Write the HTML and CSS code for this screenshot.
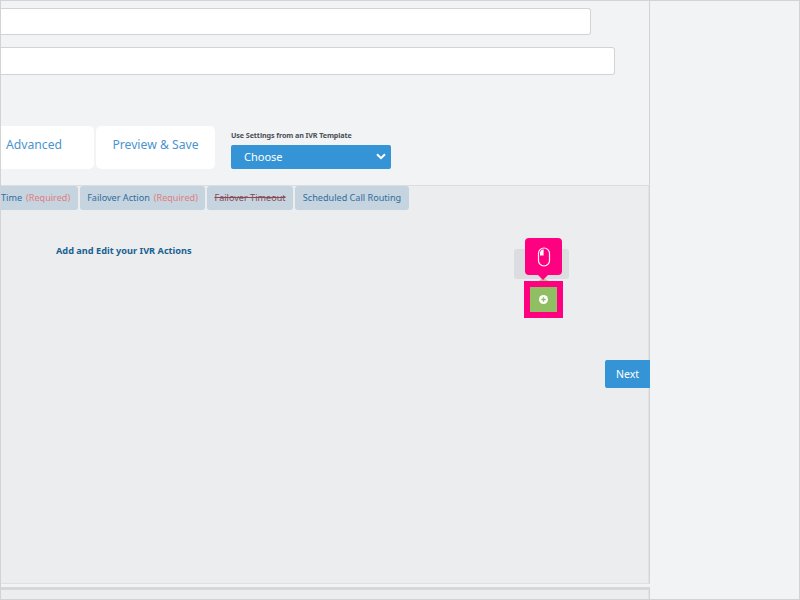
FILE: index.html
```html
<!DOCTYPE html>
<html lang="en">
<head>
<meta charset="utf-8">
<title>IVR Actions</title>
<link rel="stylesheet" href="styles.css">
</head>
<body>
<div class="frame">
  <main class="main">
    <div class="fields">
      <div class="field field-short"></div>
      <div class="field field-long"></div>
    </div>
    <div class="toolbar">
      <div class="steps">
        <a class="step step-advanced">Advanced</a>
        <a class="step step-preview">Preview &amp; Save</a>
      </div>
      <div class="template">
        <div class="template-label">Use Settings from an IVR Template</div>
        <div class="select">
          <span>Choose</span>
          <svg class="chevron" width="10" height="7" viewBox="0 0 10 7"><path d="M1 1.2l4 4 4-4" fill="none" stroke="#fff" stroke-width="2"/></svg>
        </div>
      </div>
    </div>
    <section class="panel">
      <div class="tabs">
        <a class="tab tab-first">Time <em>(Required)</em></a>
        <a class="tab tab-action">Failover Action <em>(Required)</em></a>
        <a class="tab tab-off">Failover Timeout</a>
        <a class="tab tab-routing">Scheduled Call Routing</a>
      </div>
      <div class="panel-body">
        <h2 class="actions-title">Add and Edit your IVR Actions</h2>
        <div class="add-area">
          <div class="add-grey"></div>
          <div class="add-target">
            <div class="add-green">
              <svg width="9" height="9" viewBox="0 0 9 9"><circle cx="4.5" cy="4.5" r="4.5" fill="#fff"/><path d="M4.5 2.3v4.4M2.3 4.5h4.4" stroke="#8fbe63" stroke-width="1.3"/></svg>
            </div>
          </div>
          <div class="hint">
            <svg width="16" height="22" viewBox="0 0 16 22"><rect x="2.5" y="2" width="11" height="18" rx="5.5" fill="none" stroke="#fff" stroke-width="1.2"/><path d="M7.6 3.2v6.3h-3a.6.6 0 0 1-.6-.6V7.6a4.4 4.4 0 0 1 3.6-4.4z" fill="#fff"/></svg>
          </div>
        </div>
        <a class="next">Next</a>
      </div>
      <div class="panel-foot"></div>
    </section>
  </main>
  <aside class="side"></aside>
</div>
</body>
</html>
```
FILE: styles.css
```css
html, body { margin: 0; padding: 0; }
body { width: 800px; height: 600px; overflow: hidden; background: #f2f3f5; font-family: "Noto Sans", "Open Sans", sans-serif; }
* { box-sizing: border-box; }
.frame { width: 800px; height: 600px; border: 1px solid #d2d3d5; display: flex; background: #f2f3f5; }
.main { width: 649px; height: 598px; border-right: 1px solid #d2d3d5; display: flex; flex-direction: column; }
.side { flex: 1; }
.fields { padding-top: 7px; display: flex; flex-direction: column; gap: 12px; }
.field { background: #fff; border: 1px solid #d2d3d5; border-left: 0; border-radius: 0 3px 3px 0; }
.field-short { width: 590px; height: 27px; }
.field-long { width: 614px; height: 28px; }
.toolbar { margin-top: 51px; height: 43px; display: flex; }
.steps { display: flex; gap: 2px; }
.step { background: #fff; height: 43px; color: #4a94d0; font-size: 12.2px; display: flex; align-items: center; justify-content: center; border-radius: 0 5px 5px 0; padding-bottom: 7px; }
.step-advanced { width: 93px; justify-content: flex-start; padding-left: 5px; }
.step-preview { width: 119px; border-radius: 5px; }
.template { margin-left: 16px; padding-top: 3px; }
.template-label { font-size: 7.2px; line-height: 12px; font-weight: 700; color: #4a4f55; white-space: nowrap; letter-spacing: -.1px; }
.select { margin-top: 4px; width: 160px; height: 24px; background: #3594d6; border-radius: 2px; color: #fff; font-size: 11px; display: flex; align-items: center; justify-content: space-between; padding: 0 5px 2px 13px; }
.panel { margin-top: 16px; flex: 1; background: #ecedef; border-top: 1px solid #dcdde0; display: flex; flex-direction: column; box-shadow: inset -1px 0 0 #e2e3e5; }
.tabs { display: flex; gap: 2px; height: 24px; }
.tab { background: #c5d4df; color: #2f6d9f; font-size: 9.1px; display: flex; align-items: center; gap: 4px; justify-content: center; border-radius: 3px; white-space: nowrap; padding-bottom: 1px; }
.tab em { font-style: normal; color: #e27d80; }
.tab-first { width: 77px; border-radius: 0 3px 3px 0; justify-content: flex-start; }
.tab-action { width: 125px; }
.tab-off { width: 86px; color: #8a4a55; text-decoration: line-through; }
.tab-routing { width: 114px; }
.panel-body { flex: 1; position: relative; }
.actions-title { margin: 34px 0 0 55px; font-size: 9.2px; line-height: 14px; font-weight: 700; color: #18618f; }
.add-area { position: absolute; left: 513px; top: 28px; width: 56px; height: 81px; isolation: isolate; }
.add-grey { position: absolute; left: 0; top: 11px; width: 55px; height: 30px; background: #dcdde0; border-radius: 3px; }
.add-target { position: absolute; left: 10px; top: 43px; width: 39px; height: 37px; border: 6px solid #ff0080; display: flex; }
.add-target::before { content: ""; position: absolute; left: 2px; top: -8px; width: 23px; height: 39px; background: #a9cc86; border-radius: 50%; z-index: -1; }
.add-green { flex: 1; background: #8fbe63; display: flex; align-items: center; justify-content: center; }
.hint { position: absolute; left: 11px; top: 0; width: 37px; height: 37px; background: #ff0080; border-radius: 4px; display: flex; align-items: center; justify-content: center; }
.hint::after { content: ""; position: absolute; left: 12px; top: 36px; border: 6px solid transparent; border-top-color: #ff0080; border-bottom: 0; }
.next { position: absolute; right: -1px; top: 150px; width: 45px; height: 28px; background: #3594d6; color: #fff; font-size: 10.5px; display: flex; align-items: center; justify-content: center; border-radius: 2px 0 0 2px; }
.panel-foot { height: 7px; background: linear-gradient(#f2f3f5 0 3px, #d6d7d9 3px); border-top: 1px solid #dfe0e3; margin-bottom: 9px; margin-right: -1px; }
```
